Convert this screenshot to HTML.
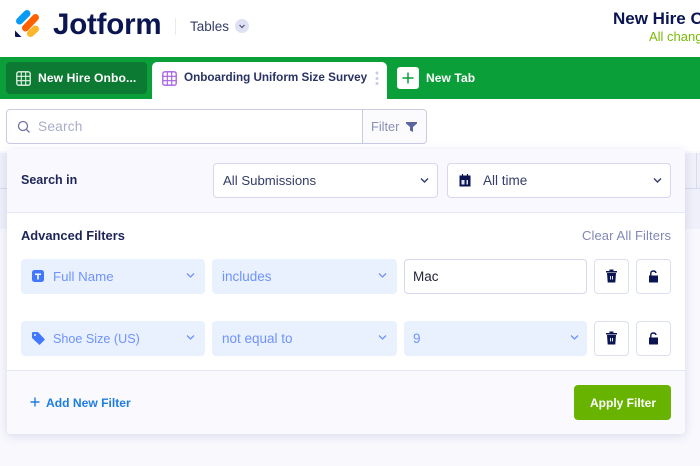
<!DOCTYPE html>
<html><head><meta charset="utf-8">
<style>
html,body{margin:0;padding:0}
body{width:700px;height:466px;position:relative;overflow:hidden;background:#f8f8fd;font-family:"Liberation Sans",sans-serif;color:#1d2558}
.a{position:absolute;box-sizing:border-box;white-space:nowrap}
.t{position:absolute;white-space:nowrap;font-size:13px;line-height:16px}
.sel{position:absolute;box-sizing:border-box;background:#fff;border:1px solid #d5d8ee;border-radius:4px}
.blue{position:absolute;box-sizing:border-box;background:#e9f0fe;border-radius:4px}
.btn{position:absolute;box-sizing:border-box;background:#fff;border:1px solid #dcdff0;border-radius:4px;width:35px;height:35px}
svg{position:absolute;overflow:hidden}
</style></head><body>
<div class="a" style="left:0;top:0;width:700px;height:151px;background:#fff"></div>

<!-- logo -->
<svg style="left:0;top:0" width="50" height="50">
<g fill="none" stroke-linecap="round">
<path d="M19.500 21L27 13.500" stroke="#0a9bf5" stroke-width="7"/>
<path d="M25.500 28L35.500 17.500" stroke="#ff6100" stroke-width="7"/>
<path d="M30.500 33.500L35.500 29" stroke="#ffb629" stroke-width="7"/>
</g>
<path d="M15 30.500L21.500 37H16Q15 37 15 36Z" fill="#0a1551"/>
</svg>
<div class="t" style="left:53px;top:8px;font-size:29.500px;line-height:34px;font-weight:bold;color:#0a1551;letter-spacing:-.2px">Jotform</div>
<div class="a" style="left:175px;top:18px;width:1px;height:17px;background:#e8e9f3"></div>
<div class="t" style="left:190px;top:19px;font-size:13.500px;color:#343c6a">Tables</div>
<div class="a" style="left:235px;top:19px;width:14px;height:14px;border-radius:50%;background:#dfe1f2"></div>
<svg style="left:235px;top:19px" width="14" height="14"><path d="M4.500 6L7 8.500L9.500 6" fill="none" stroke="#4c5380" stroke-width="1.200"/></svg>
<div class="t" style="left:613px;top:10px;width:87px;overflow:hidden;font-size:17px;line-height:18px;font-weight:bold;color:#0a1551">New Hire Onboarding</div>
<div class="t" style="left:649px;top:29px;width:51px;overflow:hidden;font-size:13px;line-height:15px;color:#78bb07">All changes saved</div>

<!-- green bar -->
<div class="a" style="left:0;top:57px;width:700px;height:42px;background:#0a9f38"></div>
<div class="a" style="left:6px;top:62px;width:141px;height:32px;background:#0c7a33;border-radius:4px"></div>
<svg style="left:16px;top:71px" width="15" height="15"><rect x=".8" y=".8" width="13.400" height="13.400" rx="2" fill="none" stroke="#e4f3e8" stroke-width="1.300"/><path d="M1 5.300H14M1 9.700H14M5.300 1V14M9.700 1V14" stroke="#e4f3e8" stroke-width="1.100"/></svg>
<div class="t" style="left:38px;top:70px;font-size:12.100px;font-weight:bold;color:#fff;letter-spacing:.1px">New Hire Onbo...</div>
<div class="a" style="left:152px;top:62px;width:235px;height:37px;background:#fff;border-radius:5px 5px 0 0"></div>
<svg style="left:162px;top:71px" width="15" height="15"><rect x=".8" y=".8" width="13.400" height="13.400" rx="2" fill="none" stroke="#a45fe0" stroke-width="1.300"/><path d="M1 5.300H14M1 9.700H14M5.300 1V14M9.700 1V14" stroke="#a45fe0" stroke-width="1.100"/></svg>
<div class="t" style="left:184px;top:70px;font-size:11.700px;font-weight:bold;color:#293263">Onboarding Uniform Size Survey</div>
<svg style="left:374px;top:70px" width="6" height="17"><g fill="#c5cae8"><circle cx="3" cy="3" r="1.500"/><circle cx="3" cy="8.500" r="1.500"/><circle cx="3" cy="13.500" r="1.500"/></g></svg>
<div class="a" style="left:397px;top:67px;width:22px;height:22px;background:#fff;border-radius:3px"></div>
<svg style="left:397px;top:67px" width="22" height="22"><path d="M11 5.500V16.500M5.500 11H16.500" stroke="#0a9f38" stroke-width="1.500"/></svg>
<div class="t" style="left:426px;top:70px;font-size:12px;font-weight:bold;color:#fff;letter-spacing:.1px">New Tab</div>

<!-- search -->
<div class="a" style="left:6px;top:109px;width:421px;height:35px;background:#fff;border:1px solid #c8cbe2;border-radius:4px"></div>
<div class="a" style="left:362px;top:110px;width:1px;height:33px;background:#c8cbe2"></div>
<div class="a" style="left:363px;top:110px;width:63px;height:33px;background:#fbfbfe;border-radius:0 3px 3px 0"></div>
<svg style="left:17px;top:120px" width="14" height="14"><circle cx="6" cy="6" r="4.500" fill="none" stroke="#6f76a7" stroke-width="1.300"/><path d="M9.500 9.500L12.500 12.500" stroke="#6f76a7" stroke-width="1.300"/></svg>
<div class="t" style="left:38px;top:119px;font-size:13.700px;color:#a9adc9;letter-spacing:.2px">Search</div>
<div class="t" style="left:371px;top:119px;font-size:12.800px;color:#8a8fb3">Filter</div>
<svg style="left:406px;top:122px" width="12" height="10"><path d="M0 0H11V1.500L7 5V10L4 8.500V5L0 1.500Z" fill="#5d65a0"/></svg>

<!-- background table hints -->
<div class="a" style="left:0;top:153px;width:7px;height:76px;background:#f0f0fa"></div>
<div class="a" style="left:0;top:188px;width:7px;height:1px;background:#d8daef"></div>
<div class="a" style="left:685px;top:153px;width:15px;height:76px;background:#f0f0fa"></div>
<div class="a" style="left:685px;top:188px;width:15px;height:1px;background:#d8daef"></div>
<div class="a" style="left:696px;top:153px;width:1px;height:35px;background:#d8daef"></div>

<!-- panel -->
<div class="a" style="left:7px;top:149px;width:678px;height:285px;background:#fff;border-radius:4px;box-shadow:0 2px 10px rgba(60,70,140,.16)"></div>
<div class="a" style="left:7px;top:149px;width:678px;height:64px;background:#f8f8fe;border-bottom:1px solid #e6e7f4;border-radius:4px 4px 0 0"></div>
<div class="a" style="left:7px;top:370px;width:678px;height:64px;background:#fafafe;border-top:1px solid #e6e7f4;border-radius:0 0 4px 4px"></div>

<div class="t" style="left:21px;top:172px;font-weight:bold;font-size:12.500px;color:#1d2558">Search in</div>
<div class="sel" style="left:213px;top:163px;width:225px;height:35px"></div>
<div class="t" style="left:223px;top:173px;font-size:13.200px;color:#343c6a">All Submissions</div>
<svg style="left:419px;top:176px" width="12" height="10"><path d="M2 2.500L5.500 6L9 2.500" fill="none" stroke="#343c6a" stroke-width="1.400"/></svg>
<div class="sel" style="left:447px;top:163px;width:224px;height:35px"></div>
<svg style="left:459px;top:174px" width="12" height="13"><path d="M.5 1.500H11.500V12.500H.5Z" fill="#0a1551"/><path d="M3.500 0V2.500M8.500 0V2.500" stroke="#0a1551" stroke-width="1.200"/><rect x="2.500" y="6" width="3" height="4.500" fill="#dfe2f2"/><rect x="7.500" y="6" width="1.500" height="4.500" fill="#dfe2f2"/></svg>
<div class="t" style="left:483px;top:173px;font-size:13.500px;color:#343c6a">All time</div>
<svg style="left:652px;top:176px" width="12" height="10"><path d="M2 2.500L5.500 6L9 2.500" fill="none" stroke="#343c6a" stroke-width="1.400"/></svg>

<div class="t" style="left:21px;top:228px;font-weight:bold;font-size:12.900px;color:#1d2558">Advanced Filters</div>
<div class="t" style="left:582px;top:228px;font-size:13px;color:#8288b5;letter-spacing:.1px">Clear All Filters</div>

<!-- row 1 -->
<div class="blue" style="left:21px;top:259px;width:184px;height:35px"></div>
<svg style="left:32px;top:270px" width="12" height="12"><rect width="12" height="12" rx="2.500" fill="#4277ff"/><path d="M3 3.500H9V5H6.800V9.500H5.200V5H3Z" fill="#fff"/></svg>
<div class="t" style="left:53px;top:269px;font-size:13.300px;color:#6f93ff">Full Name</div>
<svg style="left:185px;top:271px" width="12" height="10"><path d="M2 2.500L5.500 6L9 2.500" fill="none" stroke="#6f93ff" stroke-width="1.300"/></svg>
<div class="blue" style="left:212px;top:259px;width:185px;height:35px"></div>
<div class="t" style="left:222px;top:269px;font-size:13.500px;color:#6f93ff">includes</div>
<svg style="left:377px;top:271px" width="12" height="10"><path d="M2 2.500L5.500 6L9 2.500" fill="none" stroke="#6f93ff" stroke-width="1.300"/></svg>
<div class="sel" style="left:404px;top:259px;width:183px;height:35px"></div>
<div class="t" style="left:413px;top:269px;font-size:13.500px;color:#22253a">Mac</div>
<div class="btn" style="left:594px;top:259px"></div>
<svg style="left:606px;top:269px" width="12" height="15"><path d="M0 2H11V3.500H0ZM3.500 0.500H7.500V2H3.500ZM1 4H10L9.300 13.500H1.700Z" fill="#0a1551"/><path d="M4.500 7V10.500M6.500 7V10.500" stroke="#fff" stroke-width=".9"/></svg>
<div class="btn" style="left:636px;top:259px"></div>
<svg style="left:648px;top:270px" width="12" height="13"><path d="M1 5.500H10V12Q10 12.500 9.500 12.500H1.500Q1 12.500 1 12Z" fill="#0a1551"/><path d="M2.800 5.500V3.500Q2.800 1 5.300 1Q7.500 1 8 3" fill="none" stroke="#0a1551" stroke-width="1.400"/></svg>

<!-- row 2 -->
<div class="blue" style="left:21px;top:321px;width:184px;height:35px"></div>
<svg style="left:32px;top:332px" width="13" height="13"><path d="M0 1Q0 0 1 0H6L12.500 7Q13 7.500 12.500 8L8 12.500Q7.500 13 7 12.500L0 6Z" fill="#4277ff"/><circle cx="3" cy="3" r="1" fill="#e9f0fe"/></svg>
<div class="t" style="left:53px;top:331px;font-size:12.600px;color:#6f93ff">Shoe Size (US)</div>
<svg style="left:185px;top:333px" width="12" height="10"><path d="M2 2.500L5.500 6L9 2.500" fill="none" stroke="#6f93ff" stroke-width="1.300"/></svg>
<div class="blue" style="left:212px;top:321px;width:185px;height:35px"></div>
<div class="t" style="left:222px;top:331px;font-size:13.500px;color:#6f93ff">not equal to</div>
<svg style="left:377px;top:333px" width="12" height="10"><path d="M2 2.500L5.500 6L9 2.500" fill="none" stroke="#6f93ff" stroke-width="1.300"/></svg>
<div class="blue" style="left:404px;top:321px;width:183px;height:35px"></div>
<div class="t" style="left:413px;top:331px;font-size:13.500px;color:#6f93ff">9</div>
<svg style="left:569px;top:333px" width="12" height="10"><path d="M2 2.500L5.500 6L9 2.500" fill="none" stroke="#6f93ff" stroke-width="1.300"/></svg>
<div class="btn" style="left:594px;top:321px"></div>
<svg style="left:606px;top:331px" width="12" height="15"><path d="M0 2H11V3.500H0ZM3.500 0.500H7.500V2H3.500ZM1 4H10L9.300 13.500H1.700Z" fill="#0a1551"/><path d="M4.500 7V10.500M6.500 7V10.500" stroke="#fff" stroke-width=".9"/></svg>
<div class="btn" style="left:636px;top:321px"></div>
<svg style="left:648px;top:332px" width="12" height="13"><path d="M1 5.500H10V12Q10 12.500 9.500 12.500H1.500Q1 12.500 1 12Z" fill="#0a1551"/><path d="M2.800 5.500V3.500Q2.800 1 5.300 1Q7.500 1 8 3" fill="none" stroke="#0a1551" stroke-width="1.400"/></svg>

<!-- footer -->
<svg style="left:30px;top:397px" width="11" height="11"><path d="M5 .5V9.500M.5 5H9.500" stroke="#1d7de0" stroke-width="1.400"/></svg>
<div class="t" style="left:46px;top:395px;font-size:12.100px;font-weight:bold;color:#1d7de0">Add New Filter</div>
<div class="a" style="left:574px;top:385px;width:97px;height:35px;background:#67b300;border-radius:4px"></div>
<div class="t" style="left:590px;top:395px;font-size:12px;font-weight:bold;color:#fff">Apply Filter</div>
</body></html>
